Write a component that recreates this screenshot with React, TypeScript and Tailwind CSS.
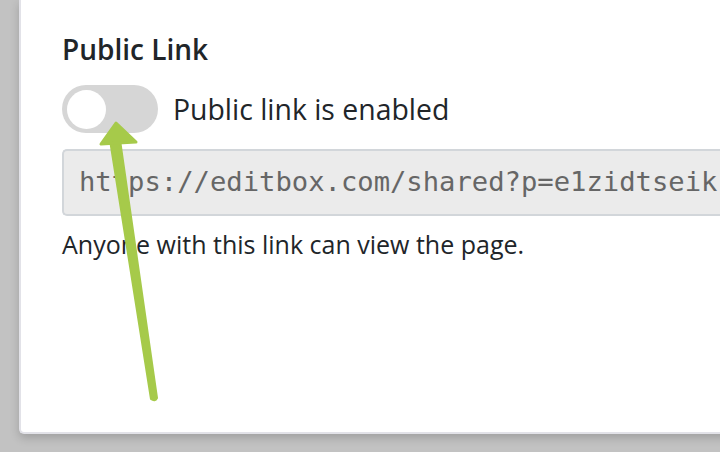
export default function App() {
  return (
    <div className="relative h-[452px] w-[720px] overflow-hidden bg-[#c2c2c2] pl-[19px] pb-[18px]" style={{ fontFamily: '"Open Sans", "Noto Sans", sans-serif' }}>
      <div className="h-full w-[740px] rounded-bl-[5px] border-b-2 border-l-2 border-[#e2e2e8] bg-white pl-[41px] pt-[31px] text-[#212529] shadow-[0_4px_10px_rgba(0,0,0,0.18)]">
        <h2 className="text-[28px] font-semibold leading-[36px]">Public Link</h2>

        {/* switch row */}
        <div className="mt-[18px] flex items-center gap-[15px]">
          <div className="flex h-[48px] w-[96px] items-center rounded-full bg-[#d6d6d6] px-[5px]">
            <div className="h-[39px] w-[39px] rounded-full bg-white" />
          </div>
          <span className="text-[28.4px] leading-[36px]">Public link is enabled</span>
        </div>

        {/* link field */}
        <div className="mt-[16px] flex h-[67px] items-center rounded-l-[5px] border-2 border-r-0 border-[#d2d6da] bg-[#ebebeb] pl-[15px]">
          <span className="whitespace-nowrap text-[27.2px] text-[#666666]" style={{ fontFamily: '"DejaVu Sans Mono", monospace' }}>
            https://editbox.com/shared?p=e1zidtseik
          </span>
        </div>

        <p className="mt-[13px] text-[25px] leading-[30px]">Anyone with this link can view the page.</p>
      </div>

      {/* annotation arrow */}
      <svg className="pointer-events-none absolute left-0 top-0" width="720" height="452" viewBox="0 0 720 452">
        <path d="M110 140 L120 140 L157 398 Q155 402 151 399 Z" fill="#a6ca4a" stroke="#a6ca4a" strokeWidth="2" strokeLinejoin="round" />
        <path d="M116 123 L101 144 L136 142 Z" fill="#a6ca4a" stroke="#a6ca4a" strokeWidth="3" strokeLinejoin="round" />
      </svg>
    </div>
  );
}
